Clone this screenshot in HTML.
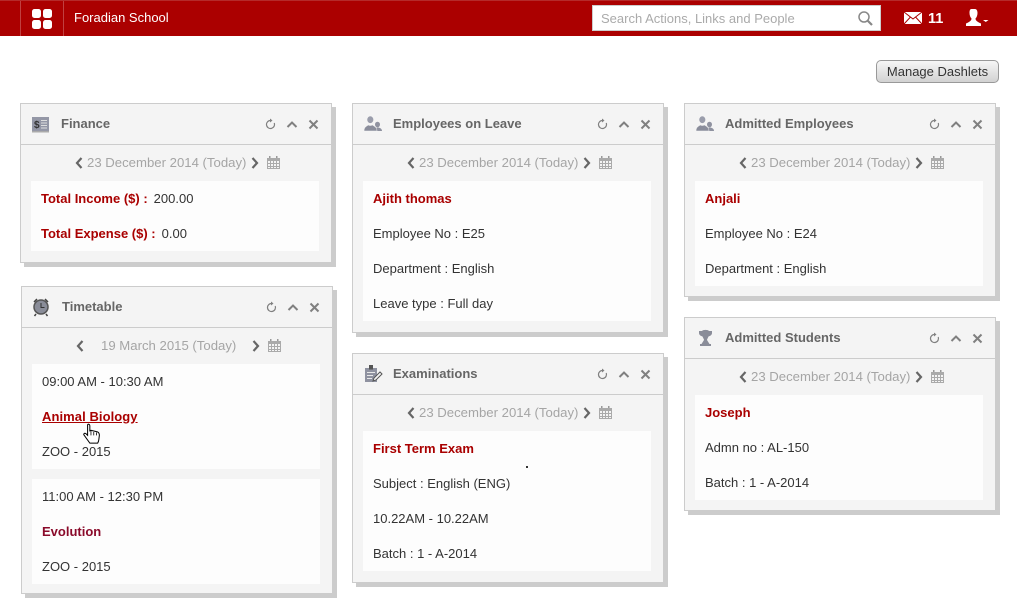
<!DOCTYPE html>
<html><head><meta charset="utf-8"><style>
html,body{margin:0;padding:0;width:1017px;height:607px;overflow:hidden;background:#fff;font-family:"Liberation Sans",sans-serif;font-size:13px;color:#333}
*{box-sizing:border-box}
.a{position:absolute}
#hd{left:0;top:0;width:1017px;height:36px;background:#ab0000;border-top:1px solid #b52a2a}
.p{position:absolute;width:312px;background:#f4f4f4;border:1px solid #ccc;box-shadow:4px 4px 0 #ccc}
.h{position:absolute;left:0;top:0;width:310px;height:41px;border-bottom:1px solid #ccc}
.ti{position:absolute;top:12px;left:40px;font-weight:bold;color:#666;font-size:13px;line-height:16px;white-space:nowrap}
.d{position:absolute;top:50px;font-size:13.17px;line-height:17px;color:#a5a5a5;white-space:nowrap}
.b{position:absolute;left:10px;width:288px;background:#fdfdfd}
.l{position:absolute;left:10px;line-height:16px;white-space:nowrap}
.r{font-weight:bold;color:#a90000}
svg{position:absolute;overflow:visible}
</style></head><body>
<svg width="0" height="0" style="position:absolute"><defs>
<g id="ctl" fill="none" stroke="#808080"><path d="M9.200 4A4 4 0 1 1 5.500 1.500" stroke-width="1.200"/><path d="M5 -.5l2.500 2-2.500 2z" fill="#808080" stroke="none"/>
<path d="M22.500 8l4.500-4.500 4.500 4.500" stroke-width="2"/><path d="M44.500 1.500l8 8M52.500 1.500l-8 8" stroke-width="2"/></g>
<g id="cal"><path d="M1 3h13v11H1z" fill="#aaa"/><path d="M2 6h2v2H2zM5 6h2v2H5zM8 6h2v2H8zM11 6h2v2h-2zM2 9h2v2H2zM5 9h2v2H5zM8 9h2v2H8zM11 9h2v2h-2zM2 12h2v1H2zM5 12h2v1H5zM8 12h2v1H8zM11 12h2v1h-2z" fill="#f4f4f4"/><path d="M3 1h1.500v2H3zM10 1h1.500v2H10z" fill="#999"/></g>
<path id="ll" d="M6.500 1L2 6l4.500 5" fill="none" stroke="#666" stroke-width="2.200"/>
<path id="rr" d="M1.500 1L6 6l-4.500 5" fill="none" stroke="#666" stroke-width="2.200"/>
<g id="ppl"><g fill="#8f92a0"><ellipse cx="13.500" cy="8.500" rx="2.500" ry="2.800"/><path d="M11 15c0-2 .5-3 2-3.500h1.500c2 .5 3.500 1.500 3.500 3.500z"/></g><g fill="#9a9dab" stroke="#f4f4f4" stroke-width=".7"><ellipse cx="6.300" cy="3.700" rx="3.400" ry="3.800"/></g><path d="M0 15c0-3.500 2-4.500 4.300-6 .8.700 3.200.7 4 0 2.500 1.500 4.700 2.500 4.700 6z" fill="#8a8d9b" stroke="#f4f4f4" stroke-width=".5"/></g>
</defs></svg>

<div class="a" id="hd">
<div class="a" style="left:20px;top:0;width:1px;height:35px;background:#c04040"></div>
<div class="a" style="left:63px;top:0;width:1px;height:35px;background:#c04040"></div>
<div class="a" style="left:32px;top:8px;width:9px;height:9px;background:#fff;border-radius:2.500px"></div>
<div class="a" style="left:43px;top:8px;width:8.500px;height:9px;background:#fff;border-radius:2.500px"></div>
<div class="a" style="left:32px;top:19px;width:9px;height:9px;background:#fff;border-radius:2.500px"></div>
<div class="a" style="left:43px;top:19px;width:8.500px;height:9px;background:#fff;border-radius:2.500px"></div>
<div class="a" style="left:74px;top:9px;color:#fff;font-size:13px;line-height:16px">Foradian School</div>
<div class="a" style="left:592px;top:4px;width:289px;height:26px;background:#fff;border:1px solid #ccc"></div>
<div class="a" style="left:601px;top:10px;color:#aaa;font-size:13px;line-height:16px">Search Actions, Links and People</div>
<svg style="left:857px;top:9px" width="18" height="18"><circle cx="7" cy="7" r="5" fill="none" stroke="#888" stroke-width="1.500"/><path d="M10.500 10.500l4.500 4.500" stroke="#888" stroke-width="2.200"/></svg>
<svg style="left:904px;top:10px" width="18" height="14"><path d="M0 1h18v12H0z" fill="#fff"/><path d="M0 1l9 7 9-7M0 13l6.500-7M18 13l-6.500-7" fill="none" stroke="#ab0000" stroke-width="1"/></svg>
<div class="a" style="left:928px;top:9px;color:#fff;font-weight:bold;font-size:14.500px;line-height:18px">11</div>
<svg style="left:965px;top:8px" width="26" height="19"><path d="M6.500 0h3.500c1.500 0 2.500 1.500 2.500 4s-1 4.500-2 5.500c0 2.500 2.500 3.500 5.500 5V17H1v-2.500c3-1.500 5.500-2.500 5.500-5-1-1-2-3-2-5.500s.5-4 2-4z" fill="#fff"/><path d="M18 11h5.500l-2.700 2z" fill="#fff"/></svg>
</div>

<div class="a" style="left:876px;top:60px;width:123px;height:23px;border:1px solid #999;border-radius:5px;background:linear-gradient(#f6f6f6,#d2d2d2);text-align:center;line-height:21px;color:#333;font-size:13px">Manage Dashlets</div>

<!-- Finance -->
<div class="p" style="left:20px;top:103px;height:160px">
<div class="h"><svg style="left:11px;top:13px" width="18" height="16"><path d="M0 0h17v14H0z" fill="#9497a6"/><path d="M0 14h17v1.500H0z" fill="#aaa"/><path d="M9 3h6v1H9zM9 5.500h6v1H9zM9 8h6v1H9zM9 10.500h6v1H9z" fill="#ddd"/><text x="2" y="11" font-size="10" font-weight="bold" fill="#333" font-family="Liberation Sans">$</text></svg><div class="ti">Finance</div>
<svg style="left:244px;top:15px" width="60" height="12"><use href="#ctl"/></svg></div>
<svg style="left:54px;top:53px" width="8" height="12"><use href="#ll"/></svg>
<div class="d" style="left:66px">23 December 2014 (Today)</div>
<svg style="left:230px;top:53px" width="8" height="12"><use href="#rr"/></svg>
<svg style="left:245px;top:51px" width="14" height="14"><use href="#cal"/></svg>
<div class="b" style="top:77px;height:70px"></div>
<div class="l" style="left:20px;top:87px"><span class="r">Total Income ($) :</span><span style="margin-left:6px">200.00</span></div>
<div class="l" style="left:20px;top:122px"><span class="r">Total Expense ($) :</span><span style="margin-left:6px">0.00</span></div>
</div>

<!-- Timetable -->
<div class="p" style="left:21px;top:286px;height:308px">
<div class="h"><svg style="left:10px;top:10px" width="18" height="20"><circle cx="9" cy="10" r="7" fill="#8a8d99" stroke="#555" stroke-width="1.500"/><path d="M9 6v4.500h3.500" fill="none" stroke="#333"/><path d="M2 5l3-3M16 5l-3-3M4 17l-1.500 2M14 17l1.500 2" stroke="#444" stroke-width="1.500"/></svg><div class="ti">Timetable</div>
<svg style="left:244px;top:15px" width="60" height="12"><use href="#ctl"/></svg></div>
<svg style="left:54px;top:53px" width="8" height="12"><use href="#ll"/></svg>
<div class="d" style="left:79px">19 March 2015 (Today)</div>
<svg style="left:230px;top:53px" width="8" height="12"><use href="#rr"/></svg>
<svg style="left:245px;top:51px" width="14" height="14"><use href="#cal"/></svg>
<div class="b" style="top:77px;height:105px"></div>
<div class="b" style="top:192px;height:105px"></div>
<div class="l" style="left:20px;top:87px">09:00 AM - 10:30 AM</div>
<div class="l r" style="left:20px;top:122px;text-decoration:underline;letter-spacing:.07px">Animal Biology</div>
<div class="l" style="left:20px;top:157px">ZOO - 2015</div>
<div class="l" style="left:20px;top:202px">11:00 AM - 12:30 PM</div>
<div class="l" style="left:20px;top:237px;font-weight:bold;color:#8a0a2a">Evolution</div>
<div class="l" style="left:20px;top:272px">ZOO - 2015</div>
<svg style="left:60px;top:136px" width="22" height="22"><g transform="scale(1.120)"><path d="M5 1.500c1-1 2 0 2 1V7l1-.5 2 .5 2 .5 2 .5c1 .5 1.500 1.500 1.500 3l-.5 4c0 1-.5 2-1 3H7L2 11c-1-1 0-2.500 1.500-1.500L5 11z" fill="#fff" stroke="#000" stroke-width=".9"/><path d="M8 7v4M10.500 8v3M13 8.500V11" stroke="#000" stroke-width=".7"/></g></svg>
</div>

<!-- Employees on Leave -->
<div class="p" style="left:352px;top:103px;height:230px">
<div class="h"><svg style="left:11px;top:12px" width="20" height="17"><use href="#ppl"/></svg><div class="ti">Employees on Leave</div>
<svg style="left:244px;top:15px" width="60" height="12"><use href="#ctl"/></svg></div>
<svg style="left:54px;top:53px" width="8" height="12"><use href="#ll"/></svg>
<div class="d" style="left:66px">23 December 2014 (Today)</div>
<svg style="left:230px;top:53px" width="8" height="12"><use href="#rr"/></svg>
<svg style="left:245px;top:51px" width="14" height="14"><use href="#cal"/></svg>
<div class="b" style="top:77px;height:140px"></div>
<div class="l r" style="left:20px;top:87px">Ajith thomas</div>
<div class="l" style="left:20px;top:122px">Employee No : E25</div>
<div class="l" style="left:20px;top:157px">Department : English</div>
<div class="l" style="left:20px;top:192px">Leave type : Full day</div>
</div>

<!-- Examinations -->
<div class="p" style="left:352px;top:353px;height:230px">
<div class="h"><svg style="left:12px;top:11px" width="19" height="19"><path d="M0 3h12v14H0z" fill="#8f92a0"/><path d="M4 0h4v4.500H4z" fill="#555"/><path d="M2 7h8v1H2zM2 10h6v1H2zM2 13h5v1H2z" fill="#e8e8e8"/><path d="M8 16l1-3 6-6 2 2-6 6z" fill="#f4f4f4" stroke="#555"/></svg><div class="ti">Examinations</div>
<svg style="left:244px;top:15px" width="60" height="12"><use href="#ctl"/></svg></div>
<svg style="left:54px;top:53px" width="8" height="12"><use href="#ll"/></svg>
<div class="d" style="left:66px">23 December 2014 (Today)</div>
<svg style="left:230px;top:53px" width="8" height="12"><use href="#rr"/></svg>
<svg style="left:245px;top:51px" width="14" height="14"><use href="#cal"/></svg>
<div class="b" style="top:77px;height:140px"></div>
<div class="l r" style="left:20px;top:87px">First Term Exam</div>
<div class="l" style="left:20px;top:122px">Subject : English (ENG)</div>
<div class="l" style="left:20px;top:157px">10.22AM - 10.22AM</div>
<div class="l" style="left:20px;top:192px">Batch : 1 - A-2014</div>
<div class="a" style="left:173px;top:112px;width:2px;height:2px;background:#333"></div>
</div>

<!-- Admitted Employees -->
<div class="p" style="left:684px;top:103px;height:194px">
<div class="h"><svg style="left:11px;top:12px" width="20" height="17"><use href="#ppl"/></svg><div class="ti">Admitted Employees</div>
<svg style="left:244px;top:15px" width="60" height="12"><use href="#ctl"/></svg></div>
<svg style="left:54px;top:53px" width="8" height="12"><use href="#ll"/></svg>
<div class="d" style="left:66px">23 December 2014 (Today)</div>
<svg style="left:230px;top:53px" width="8" height="12"><use href="#rr"/></svg>
<svg style="left:245px;top:51px" width="14" height="14"><use href="#cal"/></svg>
<div class="b" style="top:77px;height:105px"></div>
<div class="l r" style="left:20px;top:87px">Anjali</div>
<div class="l" style="left:20px;top:122px">Employee No : E24</div>
<div class="l" style="left:20px;top:157px">Department : English</div>
</div>

<!-- Admitted Students -->
<div class="p" style="left:684px;top:317px;height:194px">
<div class="h"><svg style="left:13px;top:11px" width="15" height="18"><path d="M1 2h3c1-1.500 6-1.500 7 0h3v2c0 2-2 3-3.500 3.500C10 9 9 10 9 11l2.500 4H13v2H2v-2h1.500L6 11c0-1-1-2-1.500-3.500C3 7 1 6 1 4z" fill="#8a8d99"/></svg><div class="ti">Admitted Students</div>
<svg style="left:244px;top:15px" width="60" height="12"><use href="#ctl"/></svg></div>
<svg style="left:54px;top:53px" width="8" height="12"><use href="#ll"/></svg>
<div class="d" style="left:66px">23 December 2014 (Today)</div>
<svg style="left:230px;top:53px" width="8" height="12"><use href="#rr"/></svg>
<svg style="left:245px;top:51px" width="14" height="14"><use href="#cal"/></svg>
<div class="b" style="top:77px;height:105px"></div>
<div class="l r" style="left:20px;top:87px">Joseph</div>
<div class="l" style="left:20px;top:122px">Admn no : AL-150</div>
<div class="l" style="left:20px;top:157px">Batch : 1 - A-2014</div>
</div>
</body></html>
